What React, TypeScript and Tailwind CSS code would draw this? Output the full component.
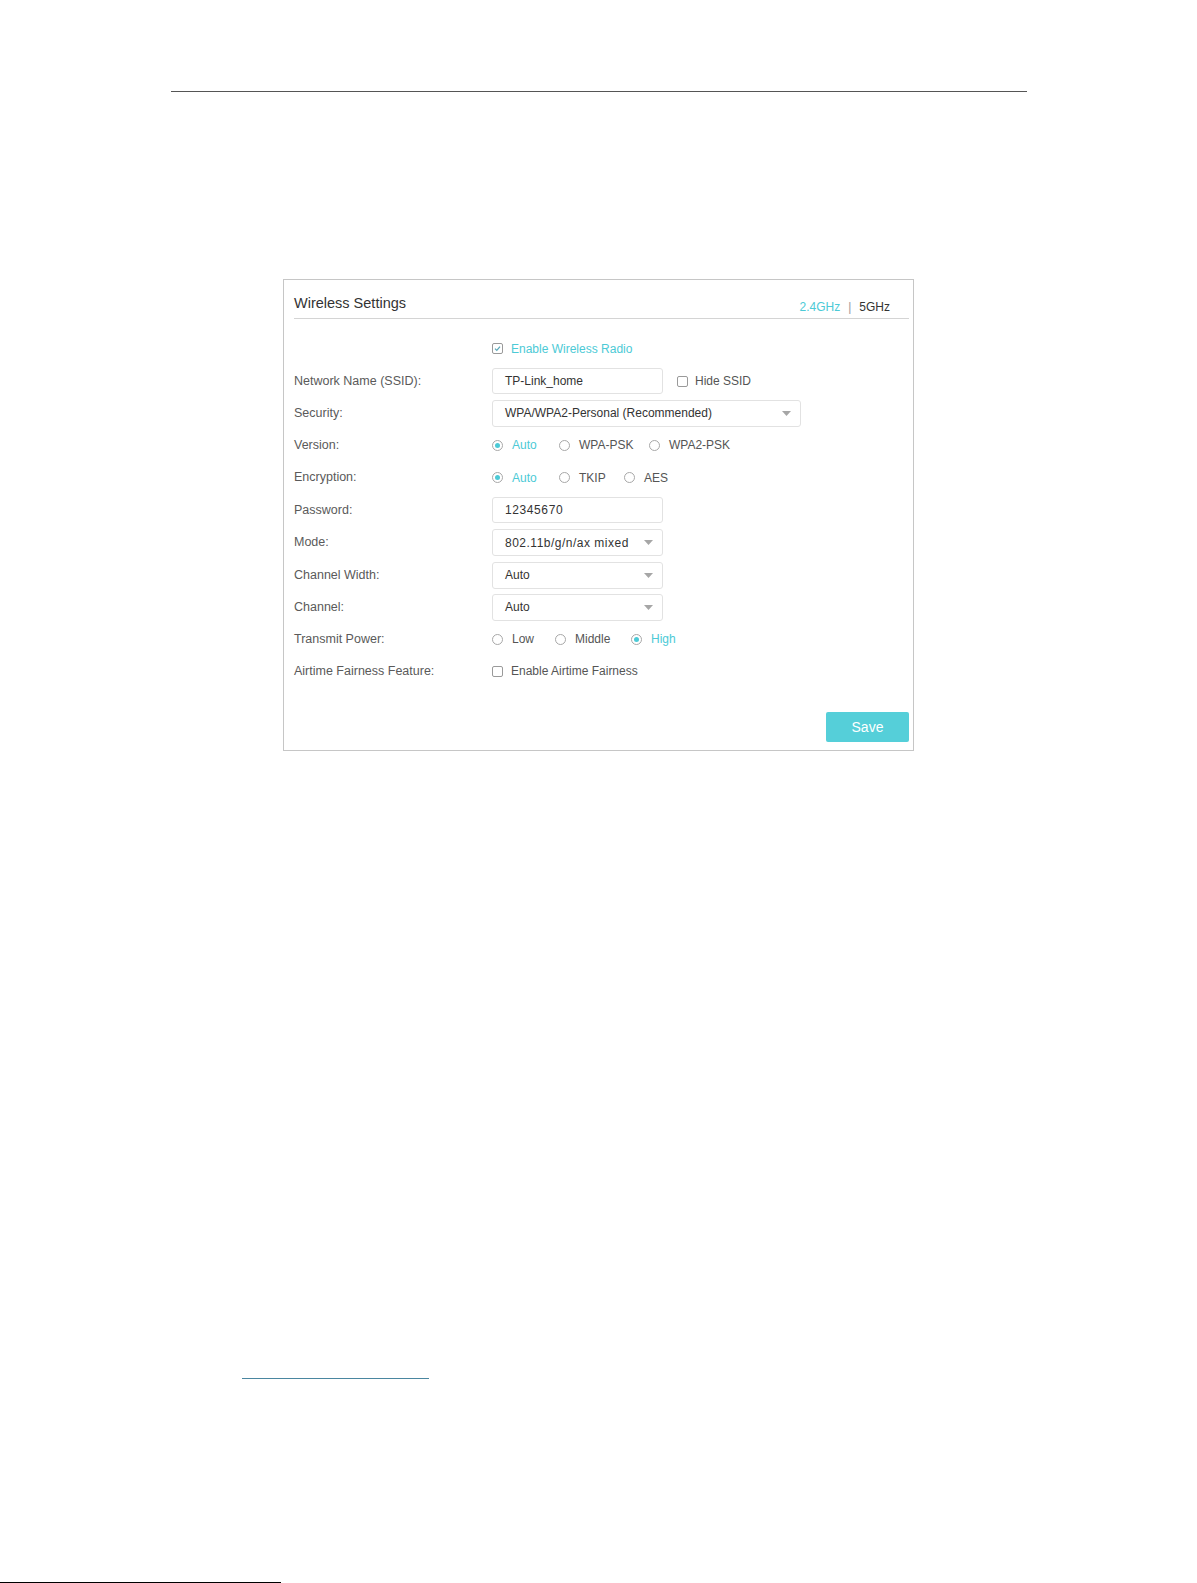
import React from "react";

const CYAN = "text-[#4ccad6]";

function Checkbox({ checked }: { checked?: boolean }) {
  return (
    <span className="relative inline-flex h-[11px] w-[11px] shrink-0 items-center justify-center rounded-[2px] border border-[#9a9a9a] bg-white">
      {checked && (
        <svg width="9" height="9" viewBox="0 0 9 9" className="absolute">
          <path d="M2 4.6 L3.8 6.4 L7 2.6" fill="none" stroke="#5aa7b8" strokeWidth="1.3" />
        </svg>
      )}
    </span>
  );
}

function Radio({ checked }: { checked?: boolean }) {
  return (
    <span className="inline-flex h-[11px] w-[11px] shrink-0 items-center justify-center rounded-full border border-[#a8a8a8] bg-white">
      {checked && <span className="h-[5px] w-[5px] rounded-full bg-[#4ccad6]" />}
    </span>
  );
}

function RadioGroup({ options, selected }: { options: { label: string; w: string }[]; selected: number }) {
  return (
    <div className="flex items-center">
      {options.map((o, i) => (
        <div key={o.label} className={`flex items-center gap-[9px] ${o.w}`}>
          <Radio checked={i === selected} />
          <span className={i === selected ? CYAN : "text-[#555]"}>{o.label}</span>
        </div>
      ))}
    </div>
  );
}

function TextBox({ value, width, extra = "" }: { value: string; width: string; extra?: string }) {
  return (
    <div className={`flex h-[26px] items-center rounded-[3px] border border-[#e2e2e2] pl-[12px] text-[#333] ${width}`}>
      <span className={extra}>{value}</span>
    </div>
  );
}

function Select({ value, width, extra = "" }: { value: string; width: string; extra?: string }) {
  return (
    <div className={`flex h-[27px] items-center justify-between rounded-[3px] border border-[#e2e2e2] pl-[12px] pr-[9px] text-[#333] ${width}`}>
      <span className={extra}>{value}</span>
      <svg width="9" height="5" viewBox="0 0 9 5">
        <path d="M0 0 H9 L4.5 5 Z" fill="#a6a6a6" />
      </svg>
    </div>
  );
}

function Row({ label, h, children }: { label?: string; h: string; children: React.ReactNode }) {
  return (
    <div className={`flex items-center ${h}`}>
      <div className="w-[198px] shrink-0 text-[12.5px] text-[#5a5a5a]">{label}</div>
      <div className="flex items-center">{children}</div>
    </div>
  );
}

export default function App() {
  return (
    <div className="relative flex min-h-[1583px] w-full flex-col bg-white font-['Liberation_Sans',Arial,sans-serif] text-[12px] leading-none">
      <div className="mx-auto mt-[91px] h-px w-[856px] bg-[#555]" />

      <div className="mx-auto mt-[187px] w-[631px] border border-[#c6c6c6] pb-[8px]">
        <div className="ml-[10px] mr-[4px] flex items-start justify-between border-b border-[#d4d4d4] pb-[6px] pt-[14px]">
          <span className="text-[14.5px] leading-[18px] text-[#333]">Wireless Settings</span>
          <div className="-mb-[3px] mr-[19px] mt-[5px] flex items-center leading-[16px]">
            <span className={CYAN}>2.4GHz</span>
            <span className="mx-[8px] text-[#999]">|</span>
            <span className="text-[#333]">5GHz</span>
          </div>
        </div>

        <div className="flex flex-col pl-[10px] pt-[13px]">
          <Row h="h-[33px]">
            <div className="flex items-center gap-[8px]">
              <Checkbox checked />
              <span className={CYAN}>Enable Wireless Radio</span>
            </div>
          </Row>
          <Row label="Network Name (SSID):" h="h-[32px]">
            <TextBox value="TP-Link_home" width="w-[171px]" />
            <div className="ml-[14px] flex items-center gap-[7px]">
              <Checkbox />
              <span className="text-[#555]">Hide SSID</span>
            </div>
          </Row>
          <Row label="Security:" h="h-[32px]">
            <Select value="WPA/WPA2-Personal (Recommended)" width="w-[309px]" />
          </Row>
          <Row label="Version:" h="h-[32px]">
            <RadioGroup
              options={[
                { label: "Auto", w: "w-[67px]" },
                { label: "WPA-PSK", w: "w-[90px]" },
                { label: "WPA2-PSK", w: "" },
              ]}
              selected={0}
            />
          </Row>
          <Row label="Encryption:" h="h-[33px]">
            <RadioGroup
              options={[
                { label: "Auto", w: "w-[67px]" },
                { label: "TKIP", w: "w-[65px]" },
                { label: "AES", w: "" },
              ]}
              selected={0}
            />
          </Row>
          <Row label="Password:" h="h-[32px]">
            <TextBox value="12345670" width="w-[171px]" extra="tracking-[0.6px]" />
          </Row>
          <Row label="Mode:" h="h-[33px]">
            <Select value="802.11b/g/n/ax mixed" width="w-[171px]" extra="tracking-[0.5px]" />
          </Row>
          <Row label="Channel Width:" h="h-[32px]">
            <Select value="Auto" width="w-[171px]" />
          </Row>
          <Row label="Channel:" h="h-[32px]">
            <Select value="Auto" width="w-[171px]" />
          </Row>
          <Row label="Transmit Power:" h="h-[32px]">
            <RadioGroup
              options={[
                { label: "Low", w: "w-[63px]" },
                { label: "Middle", w: "w-[76px]" },
                { label: "High", w: "" },
              ]}
              selected={2}
            />
          </Row>
          <Row label="Airtime Fairness Feature:" h="h-[32px]">
            <div className="flex items-center gap-[8px]">
              <Checkbox />
              <span className="text-[#555]">Enable Airtime Fairness</span>
            </div>
          </Row>
        </div>

        <div className="mr-[4px] mt-[25px] flex justify-end">
          <button className="h-[30px] w-[83px] rounded-[2px] bg-[#55cfd9] text-[14px] text-white">Save</button>
        </div>
      </div>

      <div className="ml-[242px] mt-[627px] h-px w-[187px] bg-[#4a86a0]" />

      <div className="mt-auto h-px w-[281px] bg-black" />
    </div>
  );
}
